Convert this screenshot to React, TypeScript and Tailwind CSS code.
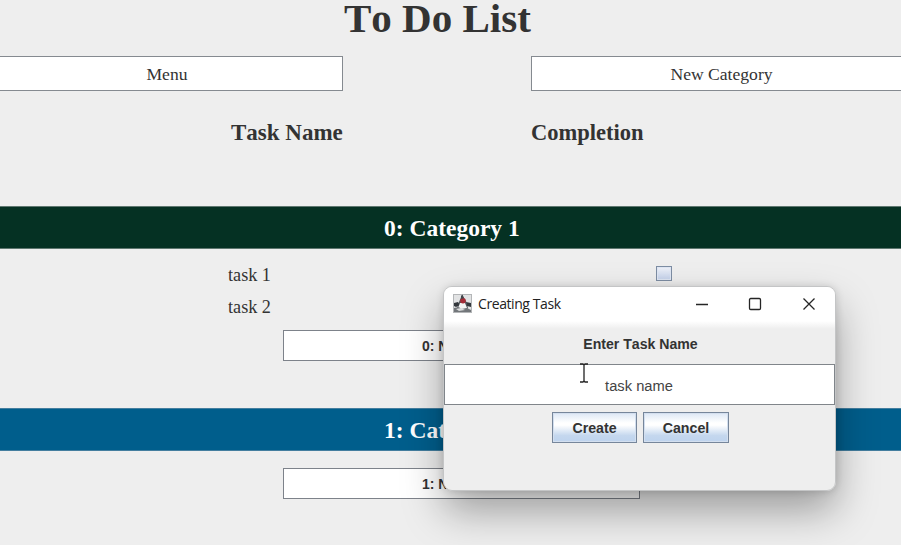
import type { ReactNode } from "react";

const serif = "font-['Liberation_Serif',serif] [font-kerning:none]";
const sans = "font-['Liberation_Sans',sans-serif] [font-kerning:none]";

function CategoryBar({ className, children }: { className: string; children: ReactNode }) {
  return (
    <div className={`flex h-[43px] shrink-0 items-center border-y pl-[384px] text-[23.5px] font-bold text-white ${className}`}>
      <span className="relative top-[1.5px] leading-none whitespace-nowrap">{children}</span>
    </div>
  );
}

function NewTaskButton({ children }: { children: ReactNode }) {
  return (
    <button className={`ml-[283px] flex h-[31px] w-[357px] shrink-0 items-center border border-[#7d828a] bg-white pt-[2px] pl-[138px] text-[14px] font-bold text-[#333] ${sans}`}>
      <span className="whitespace-nowrap">{children}</span>
    </button>
  );
}

function TaskRow({ name, checkbox }: { name: string; checkbox?: boolean }) {
  return (
    <div className="flex h-8 items-center pl-[228px]">
      <span className="w-[428px] text-[18.2px] leading-none text-[#333]">{name}</span>
      {checkbox && (
        <span className="mb-[4px] h-[15px] w-[16px] border border-[#7d8da3] bg-linear-to-b from-[#f0f2f9] to-[#c3d1ea] shadow-[inset_0_0_0_1px_#dfe6f3]" />
      )}
    </div>
  );
}

function DukeIcon() {
  return (
    <svg className="-mt-[2px]" width="19" height="19" viewBox="0 0 19 19">
      <rect x="0.5" y="0.5" width="18" height="18" fill="#e2e3e4" stroke="#b4b6b8" />
      <path d="M9 1 L13 7 L15 14 L13 17 L5 17 L4 14 L6 8 Z" fill="#54585d" />
      <path d="M1 9 L5 8 L7 11 L3 13 L1 12 Z M13 8 L18 9 L18 13 L14 12 Z" fill="#33373c" />
      <path d="M7 9 L12 9 L14 14 L10 16 L5 14 Z" fill="#f3f3f3" />
      <path d="M1 14 L6 13 L8 15 L14 14 L18 16 L18 18 L1 18 Z" fill="#72767a" />
      <path d="M3 15 L8 14 L12 16 L6 17 Z" fill="#d9dadb" />
      <ellipse cx="10" cy="6.8" rx="2.8" ry="2.7" fill="#a52c37" />
      <path d="M8 2 L9.5 0.5 L11 4 L8 5 Z" fill="#41454a" />
    </svg>
  );
}

function MetalButton({ className, children }: { className: string; children: ReactNode }) {
  return (
    <button className={`flex h-[31px] items-center justify-center border border-[#76869b] bg-[linear-gradient(#dce7f5_0%,#fff_34%,#fff_42%,#c4d7ee_78%,#bed3ee_100%)] pt-[2px] text-[14.2px] font-bold text-[#333] shadow-[inset_0_0_0_1px_#d3dfef] ${className}`}>
      {children}
    </button>
  );
}

function Dialog() {
  return (
    <section className={`absolute top-[286px] left-[443px] flex h-[205px] w-[393px] flex-col overflow-hidden rounded-[9px] border border-[#c4c5c6] bg-[#eee] ${sans}`}>
      <header className="flex h-[34px] shrink-0 items-center bg-white pl-[9px]">
        <DukeIcon />
        <span className="-mt-px ml-[6px] w-[218px] font-['Open_Sans',sans-serif] text-[14px] tracking-[-0.42px] whitespace-nowrap text-[#222]">Creating Task</span>
        <svg className="-mt-px" width="121" height="14" viewBox="0 0 121 14" fill="none" stroke="#252525" strokeWidth="1.3">
          <path d="M0 7.5H12" />
          <rect x="53.5" y="1.5" width="11" height="11" rx="1.2" />
          <path d="M107.5 1.5L118.5 12.5M118.5 1.5L107.5 12.5" />
        </svg>
      </header>
      <div className="h-[8px] shrink-0 bg-linear-to-b from-white to-[#eee]" />
      <div className="flex h-[35px] shrink-0 justify-center pt-[6px] pl-[2px] text-[14.1px] leading-[18px] font-bold text-[#333]">
        <span>Enter Task Name</span>
      </div>
      <div className="flex h-[41px] shrink-0 items-center justify-center border border-[#80858a] bg-white pt-[3px] text-[14.7px] text-[#444]">
        <span className="-ml-px">task name</span>
      </div>
      <div className="flex gap-[6px] pt-[7px] pl-[108px]">
        <MetalButton className="w-[85px]">Create</MetalButton>
        <MetalButton className="w-[86px]">Cancel</MetalButton>
      </div>
    </section>
  );
}

export default function App() {
  return (
    <main className={`relative flex h-[545px] w-[901px] flex-col overflow-hidden bg-[#eee] text-[#333] ${serif}`}>
      <h1 className="h-[56px] shrink-0 pl-[344px] text-[41px] leading-[37px] font-bold whitespace-nowrap">To Do List</h1>
      <div className="flex h-[35px] shrink-0 justify-between text-[17.6px]">
        <button className="w-[343px] border border-l-0 border-[#858a90] bg-white pt-[2px] pr-[8px]">Menu</button>
        <button className="w-[370px] border border-r-0 border-[#858a90] bg-white pt-[2px] pl-[10px]">New Category</button>
      </div>
      <div className="flex h-[115px] shrink-0 pt-[29px] pl-[231px] leading-[25px] font-bold">
        <span className="w-[300px] text-[23px] whitespace-nowrap">Task Name</span>
        <span className="text-[22.5px]">Completion</span>
      </div>
      <CategoryBar className="border-[#5f7770] bg-[#053123]">0: Category 1</CategoryBar>
      <div className="h-[81px] shrink-0 pt-[10px]">
        <TaskRow name="task 1" checkbox />
        <TaskRow name="task 2" />
      </div>
      <NewTaskButton>0: New Task</NewTaskButton>
      <div className="h-[47px] shrink-0" />
      <CategoryBar className="border-[#447e9f] bg-[#005e8c]">1: Category 2</CategoryBar>
      <div className="h-[17px] shrink-0" />
      <NewTaskButton>1: New Task</NewTaskButton>

      {/* window shadow, offset downwards behind the dialog */}
      <div className="absolute top-[287px] left-[444px] h-[204px] w-[392px] rounded-[9px] shadow-[0_20px_40px_rgba(0,0,0,0.34),0_0_8px_rgba(0,0,0,0.16)]" />
      <Dialog />

      {/* text cursor */}
      <svg className="absolute top-[363px] left-[578px]" width="12" height="20" viewBox="0 0 12 20" fill="none" stroke="#222" strokeWidth="1.3">
        <path d="M2 1H5L6 2L7 1H10M6 2V18M2 19H5L6 18L7 19H10" />
      </svg>
    </main>
  );
}
